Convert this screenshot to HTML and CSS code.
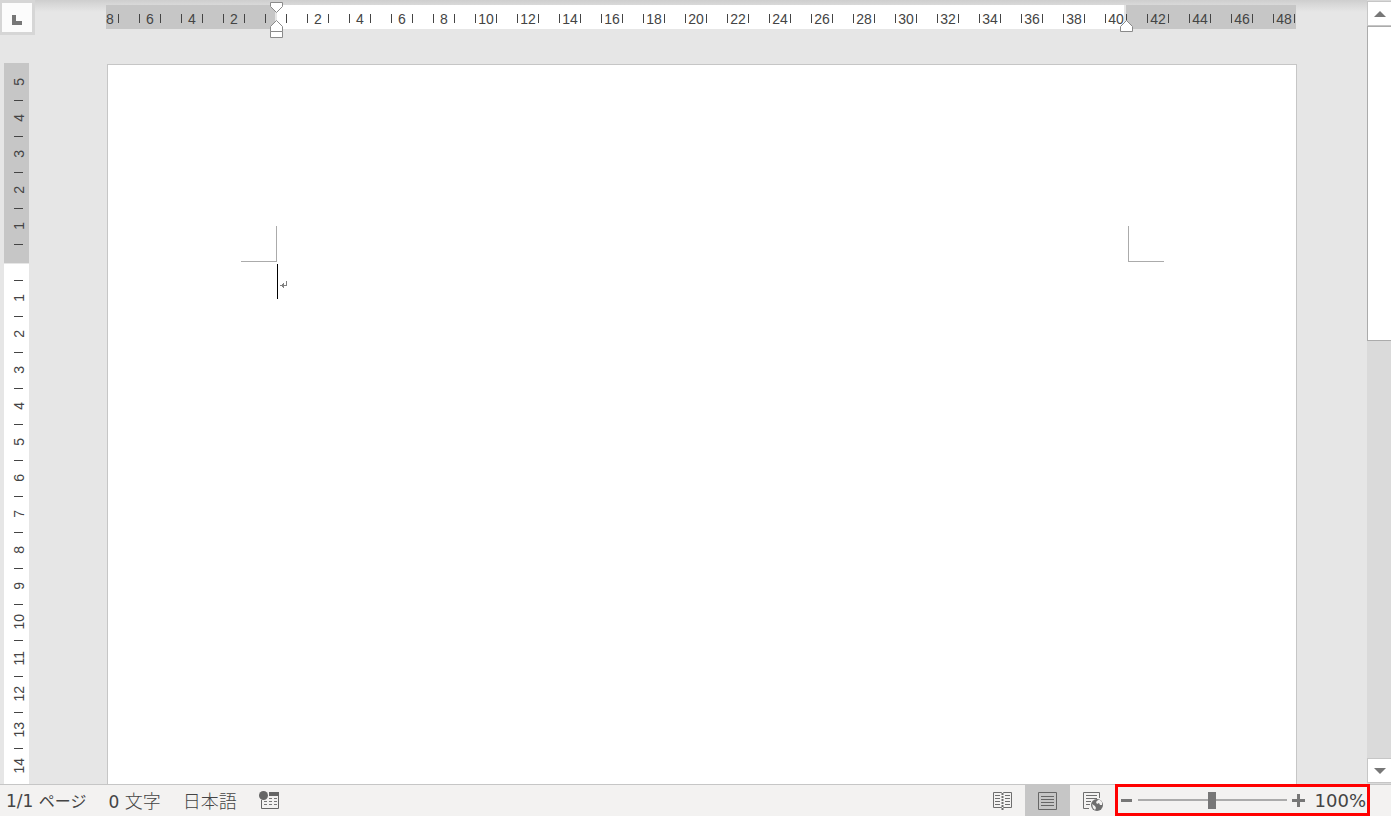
FILE: index.html
```html
<!DOCTYPE html>
<html lang="ja">
<head>
<meta charset="utf-8">
<title>文書</title>
<link rel="stylesheet" href="styles.css">
</head>
<body>
<main class="workspace">
  <aside class="side">
    <button class="tab-stop" type="button" aria-label="左揃えタブ">
      <svg width="10" height="10" viewBox="0 0 10 10"><path d="M0 0h4v6h6v4H0z" fill="#777"/></svg>
    </button>
    <div class="v-ruler" id="v-ruler"></div>
  </aside>
  <section class="editor">
    <div class="h-ruler">
      <div class="h-scale" id="h-scale"></div>
      <svg class="marker marker-indent" width="13" height="37" viewBox="0 0 13 37" fill="#fff" stroke="#8a8a8a">
        <path d="M.5.5h12v4l-6 6-6-6z"/><path d="M.5 29.500h12v-5l-6-6-6 6z"/><path d="M.5 29.500h12v6H.5z"/>
      </svg>
      <svg class="marker marker-right" width="13" height="13" viewBox="0 0 13 13" fill="#fff" stroke="#8a8a8a">
        <path d="M.5 11.500h12v-5l-6-6-6 6z"/>
      </svg>
    </div>
    <article class="page">
      <div class="crop-row"><span class="crop crop-left"></span><span class="crop crop-right"></span></div>
      <div class="line"><span class="caret"></span>
        <svg width="8" height="8" viewBox="0 0 8 8" fill="#808080"><path d="M6 0h1v5H4v2H3V6H2V5H0V4h2V3h1V2h1v2h2z"/></svg>
      </div>
    </article>
  </section>
  <div class="scrollbar">
    <button class="arrow arrow-up" type="button" aria-label="上へ"><svg width="12" height="6" viewBox="0 0 12 6"><path d="M6 0l6 6H0z" fill="#777"/></svg></button>
    <div class="track"><div class="thumb"></div></div>
    <button class="arrow arrow-down" type="button" aria-label="下へ"><svg width="12" height="6" viewBox="0 0 12 6"><path d="M6 6l6-6H0z" fill="#777"/></svg></button>
  </div>
</main>
<footer class="status">
  <div class="info">
    <button class="status-item" type="button">1/1 <span class="kana">ページ</span></button>
    <button class="status-item" type="button">0 <span class="kanji">文字</span></button>
    <button class="status-item" type="button"><span class="kanji">日本語</span></button>
    <button class="status-item macro" type="button" aria-label="マクロの記録">
      <svg width="21" height="20" viewBox="0 0 21 20"><path d="M10 1h10v4H10z" fill="#666"/><path d="M2.500 9v8.500h17V4" fill="none" stroke="#666"/><path d="M10 7.500h3m2 0h3M5 10.500h3m2 0h3m2 0h3M5 13.500h3m2 0h3m2 0h3" stroke="#777"/><circle cx="4.500" cy="4.500" r="4.500" fill="#666"/></svg>
    </button>
  </div>
  <div class="views">
    <button class="view" type="button" aria-label="閲覧モード">
      <svg width="20" height="20" viewBox="0 0 20 20" fill="none" stroke="#6e6e6e"><path d="M9.500 2.500L8.500 1.500H.5v15h8l1 1 1-1h8v-15h-8z"/><path d="M9.500 2v17" stroke-width="2" stroke-dasharray="2 1"/><path d="M2 4.500h5M2 7.500h5M2 10.500h5M2 13.500h5M12 4.500h5M12 7.500h5M12 10.500h5M12 13.500h5"/></svg>
    </button>
    <button class="view view-active" type="button" aria-label="印刷レイアウト">
      <svg width="20" height="20" viewBox="0 0 20 20" fill="none" stroke="#666"><path d="M.5 1.500h18v17H.5zM3 5.500h13M3 8.500h13M3 11.500h13M3 14.500h13"/></svg>
    </button>
    <button class="view" type="button" aria-label="Web レイアウト">
      <svg width="20" height="20" viewBox="0 0 20 20" fill="none" stroke="#6e6e6e"><path d="M6 17.500H.5v-16h16V7M3 4.500h11M3 7.500h11M3 10.500h5M3 13.500h4"/><circle cx="14" cy="14" r="6" fill="#6e6e6e" stroke="none"/><path d="M15 9l-2 2 1 2 2-1 1 2 2 0v-3l-2-2zM9 13l3 2 1 2-1 2-2-2z" fill="#f3f2f1" stroke="none"/></svg>
    </button>
  </div>
  <div class="zoom">
    <button class="step" type="button" aria-label="縮小"><svg width="13" height="13" viewBox="0 0 13 13"><path d="M1 5h11v3H1z" fill="#777"/></svg></button>
    <input class="slider" type="range" min="0" max="200" value="100" aria-label="ズーム">
    <button class="step" type="button" aria-label="拡大"><svg width="13" height="13" viewBox="0 0 13 13"><path d="M0 5h5V0h3v5h5v3H8v5H5V8H0z" fill="#777"/></svg></button>
    <button class="percent" type="button">100%</button>
  </div>
</footer>
<script src="script.js"></script>
</body>
</html>
```
FILE: styles.css
```css
* { box-sizing: border-box; }
body {
  margin: 0;
  height: 100vh;
  display: flex;
  flex-direction: column;
  overflow: hidden;
  background: #e6e6e6;
  color: #444;
  font-family: "DejaVu Sans", "Noto Sans CJK JP", sans-serif;
}
button {
  margin: 0;
  padding: 0;
  border: 0;
  background: none;
  color: inherit;
  font: inherit;
}
svg { display: block; flex: none; }
.workspace {
  flex: 1;
  min-height: 0;
  display: flex;
  background: linear-gradient(#cecece, #d9d9d9 5px, #e6e6e6 12px);
}
.side {
  width: 106px;
  flex: none;
  display: flex;
  flex-direction: column;
}
.tab-stop {
  width: 35px;
  height: 35px;
  margin-bottom: 28px;
  padding-top: 4px;
  flex: none;
  display: grid;
  place-items: center;
  background: #fcfcfc;
  border: 3px solid #d6d6d6;
  border-left-width: 2px;
}
.v-ruler {
  flex: 1;
  min-height: 0;
  width: 25px;
  margin-left: 4px;
  padding-top: 2px;
  overflow: hidden;
  background: linear-gradient(#c6c6c6 200px, #e6e6e6 200px 201px, #fff 201px);
  font: 14px/14px "Liberation Sans", sans-serif;
}
.v-cell {
  height: 36px;
  padding: 0 0 2px 8px;
  display: flex;
  align-items: center;
  background: linear-gradient(#444, #444) 10px 100% / 9px 1px no-repeat;
}
.v-cell span {
  writing-mode: vertical-rl;
  transform: rotate(180deg);
}
.editor {
  flex: 1;
  min-width: 0;
  display: flex;
  flex-direction: column;
}
.h-ruler {
  position: relative;
  flex: none;
  padding-top: 5px;
  margin: 0 71px 35px 0;
}
.h-scale {
  height: 24px;
  display: flex;
  overflow: hidden;
  background: linear-gradient(90deg, #c6c6c6 169px, #e6e6e6 169px 171px, #fff 171px 1018px, #e6e6e6 1018px 1020px, #c6c6c6 1020px);
  font: 14px/28px "Liberation Sans", sans-serif;
}
.h-cell {
  width: 42px;
  flex: none;
}
.h-cell span {
  display: block;
  width: 22px;
  height: 24px;
  text-align: center;
  background:
    linear-gradient(#444, #444) 0 9px / 1px 9px no-repeat,
    linear-gradient(#444, #444) 100% 9px / 1px 9px no-repeat;
}
.h-cell:first-child { width: 33px; }
.h-cell:first-child span {
  width: 13px;
  text-align: left;
  background: linear-gradient(#444, #444) 100% 9px / 1px 9px no-repeat;
}
.marker { position: absolute; }
.marker-indent { left: 164px; top: 2px; }
.marker-right { left: 1014px; top: 20px; }
.page {
  flex: 1;
  min-height: 0;
  margin: 0 70px 0 1px;
  padding: 161px 132px 0 133px;
  background: #fff;
  border: 1px solid #c6c6c6;
  border-bottom: 0;
}
.crop-row { display: flex; justify-content: space-between; }
.crop {
  width: 36px;
  height: 36px;
  border-bottom: 1px solid #ababab;
}
.crop-left { border-right: 1px solid #ababab; }
.crop-right { border-left: 1px solid #ababab; }
.line {
  display: flex;
  align-items: center;
  gap: 2px;
  margin: 2px 0 0 36px;
}
.caret { width: 1px; height: 35px; background: #000; }
.line svg { margin-top: 6px; }
.scrollbar {
  width: 24px;
  flex: none;
  padding: 1px 0;
  display: flex;
  flex-direction: column;
  background: #dadada;
}
.arrow {
  height: 25px;
  flex: none;
  display: grid;
  place-items: center;
  background: #fff;
  border: 1px solid #c6c6c6;
  border-right: 0;
}
.track { flex: 1; min-height: 0; }
.thumb {
  height: 43%;
  background: #fff;
  border: 1px solid #ababab;
  border-right: 0;
}
.status {
  height: 32px;
  flex: none;
  display: flex;
  background: #f3f2f1;
  border-top: 1px solid #c6c6c6;
  font-size: 17px;
}
.info {
  flex: 1;
  display: flex;
  align-items: center;
  gap: 22px;
  padding-left: 6px;
}
.status-item { line-height: 31px; padding-top: 1px; white-space: nowrap; }
.macro { padding: 0; }
.kana, .kanji { font-family: "Noto Sans CJK JP", sans-serif; }
.kana { font-size: 16px; }
.kanji { font-size: 18px; font-weight: 300; }
.views { display: flex; }
.view {
  width: 45px;
  display: grid;
  place-items: center;
}
.view-active { background: #c6c6c6; }
.zoom {
  width: 255px;
  height: 32px;
  margin: -1px 21px 0 0;
  padding: 0 1px 0 2px;
  display: flex;
  align-items: center;
  border: 3px solid #f00;
}
.slider {
  appearance: none;
  flex: 1;
  min-width: 0;
  height: 18px;
  margin: 0 5px;
  background: linear-gradient(#ababab, #ababab) 0 8px / 100% 2px no-repeat;
}
.slider::-webkit-slider-thumb {
  appearance: none;
  width: 8px;
  height: 17px;
  background: #777;
}
.percent { margin-left: 10px; padding-top: 2px; font-size: 18px; line-height: 24px; }
```
FILE: script.js
```js
function addCell(parent, className, text) {
  const cell = document.createElement("div");
  const label = document.createElement("span");
  cell.className = className;
  label.textContent = text;
  cell.append(label);
  parent.append(cell);
}

const hScale = document.getElementById("h-scale");
for (let n = -8; n <= 48; n += 2) {
  addCell(hScale, "h-cell", n === 0 ? "" : Math.abs(n));
}

const vRuler = document.getElementById("v-ruler");
for (let n = -5; n <= 14; n += 1) {
  addCell(vRuler, "v-cell", n === 0 ? "" : Math.abs(n));
}
```
